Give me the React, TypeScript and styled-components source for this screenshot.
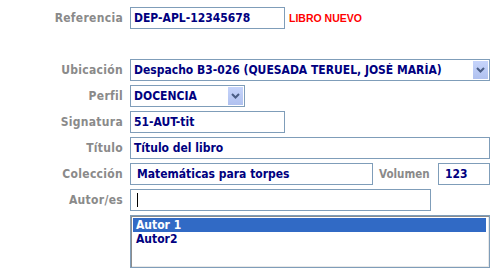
import React from 'react';
import styled, { createGlobalStyle } from 'styled-components';

const GlobalStyle = createGlobalStyle`
  html, body {
    margin: 0;
    padding: 0;
    background: #ffffff;
  }
`;

const labelFont = `"DejaVu Sans Condensed", "DejaVu Sans", Verdana, sans-serif`;
const valueFont = `"DejaVu Sans Condensed", "DejaVu Sans", Verdana, sans-serif`;

const Page = styled.div`
  width: 503px;
  height: 274px;
  padding-top: 7px;
  box-sizing: border-box;
`;

const Form = styled.div`
  width: 490px;
  display: grid;
  grid-template-columns: 123px 1fr;
  column-gap: 7px;
  row-gap: 4px;
  align-items: center;
`;

const Label = styled.div`
  text-align: right;
  font-family: ${labelFont};
  font-stretch: condensed;
  font-weight: bold;
  font-size: 12px;
  color: #8a8a8a;
  letter-spacing: 0.3px;
`;

const Spacer = styled.div`
  grid-column: 1 / span 2;
  height: 22px;
`;

const Field = styled.div`
  display: flex;
  align-items: center;
`;

const Input = styled.div<{ $w?: number; $pad?: number }>`
  box-sizing: border-box;
  height: 22px;
  width: ${(p) => (p.$w ? `${p.$w}px` : '100%')};
  flex: none;
  border: 1px solid #7f9db9;
  background: #fff;
  padding: 0 ${(p) => p.$pad ?? 3}px;
  display: flex;
  align-items: center;
  font-family: ${valueFont};
  font-stretch: condensed;
  font-weight: bold;
  font-size: 12px;
  color: #00007f;
  white-space: nowrap;
  overflow: hidden;
`;

const Caret = styled.span`
  display: inline-block;
  width: 1px;
  height: 14px;
  background: #000;
`;

const Badge = styled.span`
  margin-left: 4px;
  font-family: "Liberation Sans", Arial, sans-serif;
  font-weight: bold;
  font-size: 10.5px;
  color: #ff0000;
`;

const Select = styled.div<{ $w?: number }>`
  box-sizing: border-box;
  height: 22px;
  width: ${(p) => (p.$w ? `${p.$w}px` : '100%')};
  border: 1px solid #7f9db9;
  background: #fff;
  padding: 1px 1px 1px 3px;
  display: flex;
  align-items: center;
  font-family: ${valueFont};
  font-stretch: condensed;
  font-weight: bold;
  font-size: 12px;
  color: #00007f;
  white-space: nowrap;
`;

const SelectText = styled.span`
  flex: 1;
  overflow: hidden;
`;

const ArrowBox = styled.span`
  width: 15px;
  height: 18px;
  display: flex;
  align-items: center;
  justify-content: center;
  background: linear-gradient(#c6d4fb, #b0c1ef);
`;

const SideLabel = styled(Label)`
  margin-left: 6px;
  margin-right: auto;
  letter-spacing: 0;
  font-size: 11.5px;
`;

const ListBox = styled.div`
  box-sizing: border-box;
  height: 53px;
  border: 1px solid #7f9db9;
  padding: 2px 3px 2px 2px;
  box-shadow: inset 1px 1px 0 #8c8c8c, inset -1px -1px 0 #e8e8e8;
  background: #fff;
`;

const ListItem = styled.div<{ $selected?: boolean }>`
  height: 14px;
  line-height: 14px;
  padding-left: 3px;
  font-family: ${valueFont};
  font-stretch: condensed;
  font-weight: bold;
  font-size: 12px;
  background: ${(p) => (p.$selected ? '#316ac5' : 'transparent')};
  color: ${(p) => (p.$selected ? '#ffffff' : '#00007f')};
`;

const Chevron: React.FC = () => (
  <svg width="9" height="6" viewBox="0 0 9 6">
    <polyline points="1,1 4.5,4.5 8,1" fill="none" stroke="#4a5d85" strokeWidth="2" />
  </svg>
);

const App: React.FC = () => {
  return (
    <Page>
      <GlobalStyle />
      <Form>
        <Label>Referencia</Label>
        <Field>
          <Input $w={155}>DEP-APL-12345678</Input>
          <Badge>LIBRO NUEVO</Badge>
        </Field>
        <Spacer />

        <Label>Ubicación</Label>
        <Select>
          <SelectText>Despacho B3-026 (QUESADA TERUEL, JOSÉ MARÍA)</SelectText>
          <ArrowBox>
            <Chevron />
          </ArrowBox>
        </Select>

        <Label>Perfil</Label>
        <Field>
          <Select $w={115}>
            <SelectText>DOCENCIA</SelectText>
            <ArrowBox>
              <Chevron />
            </ArrowBox>
          </Select>
        </Field>

        <Label>Signatura</Label>
        <Field>
          <Input $w={155}>51-AUT-tit</Input>
        </Field>

        <Label>Título</Label>
        <Input>Título del libro</Input>

        <Label>Colección</Label>
        <Field>
          <Input $w={243} $pad={6}>Matemáticas para torpes</Input>
          <SideLabel>Volumen</SideLabel>
          <Input $w={52} $pad={6}>123</Input>
        </Field>

        <Label>Autor/es</Label>
        <Field>
          <Input $w={301} $pad={6}>
            <Caret />
          </Input>
        </Field>

        <div />
        <ListBox>
          <ListItem $selected>Autor 1</ListItem>
          <ListItem>Autor2</ListItem>
        </ListBox>
      </Form>
    </Page>
  );
};

export default App;
